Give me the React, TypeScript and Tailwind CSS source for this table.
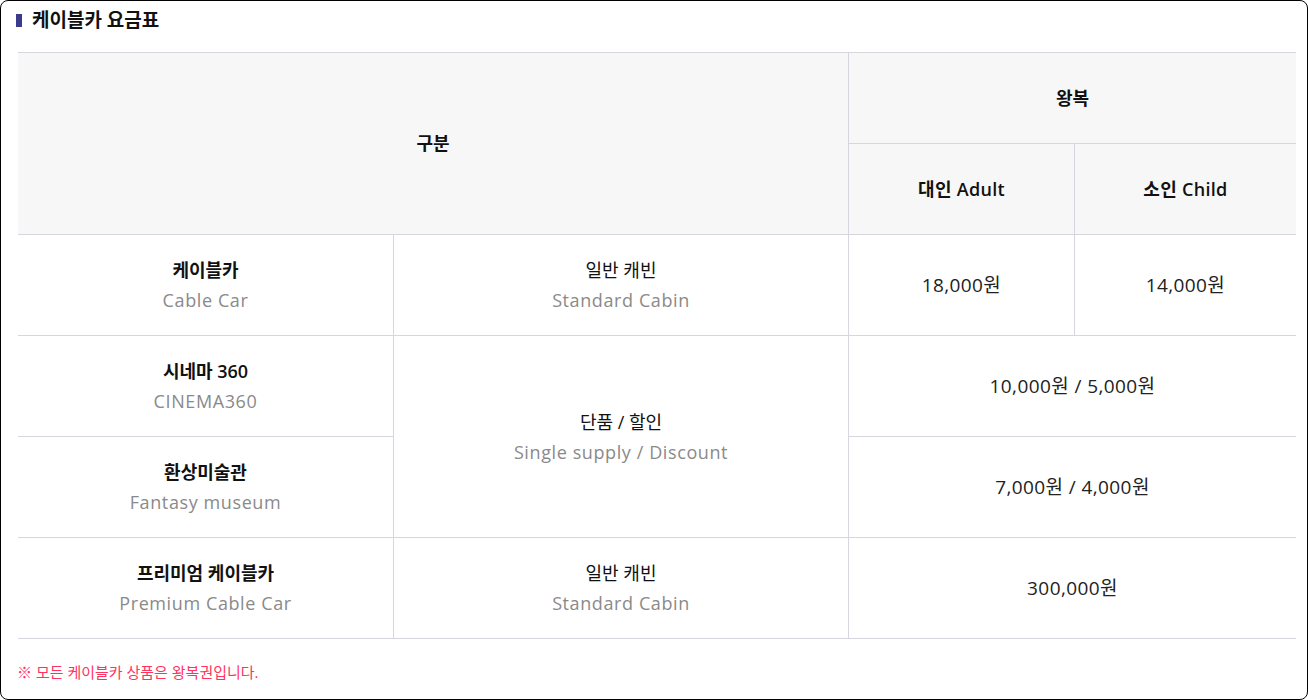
import React from "react";

const font = { fontFamily: '"Open Sans", "Noto Sans CJK KR", sans-serif' };

function Cell({
  children,
  className = "",
}: {
  children?: React.ReactNode;
  className?: string;
}) {
  return (
    <div className={`flex flex-col items-center justify-center border-b border-[#d6d6de] text-center ${className}`}>
      {children}
    </div>
  );
}

function Name({ ko, en }: { ko: string; en: string }) {
  return (
    <>
      <div className="text-[18px] font-semibold leading-[30px] text-[#111]">{ko}</div>
      <div className="text-[18px] leading-[30px] tracking-[0.6px] text-[#8a8a8a]">{en}</div>
    </>
  );
}

function Sub({ ko, en }: { ko: string; en: string }) {
  return (
    <>
      <div className="text-[18px] leading-[30px] text-[#111]">{ko}</div>
      <div className="text-[18px] leading-[30px] tracking-[0.6px] text-[#8a8a8a]">{en}</div>
    </>
  );
}

function Price({ children }: { children: React.ReactNode }) {
  return <span className="text-[19px] tracking-[0.4px] text-[#222]">{children}</span>;
}

export default function App() {
  return (
    <div
      style={font}
      className="box-border h-[700px] w-[1308px] overflow-hidden rounded-[8px] border border-black bg-white"
    >
      <div className="flex h-[38px] items-center pl-[15px] pt-[1px]">
        <span className="mr-[10px] h-[13px] w-[6px] bg-[#3b3b8e]" />
        <span className="text-[19px] font-bold text-[#111]">케이블카 요금표</span>
      </div>
      <div className="ml-[17px] mt-[13px] w-[1278px] border-t border-[#d6d6de]">
        <div className="grid grid-cols-[376px_455px_226px_221px] grid-rows-[91px_91px_101px_101px_101px_101px]">
          <Cell className="col-span-2 row-span-2 border-r bg-[#f7f7f7]">
            <span className="text-[18px] font-semibold text-[#111]">구분</span>
          </Cell>
          <Cell className="col-span-2 bg-[#f7f7f7]">
            <span className="text-[18px] font-semibold text-[#111]">왕복</span>
          </Cell>
          <Cell className="border-r bg-[#f7f7f7]">
            <span className="text-[18px] font-semibold tracking-[0.3px] text-[#111]">대인 Adult</span>
          </Cell>
          <Cell className="bg-[#f7f7f7]">
            <span className="text-[18px] font-semibold tracking-[0.3px] text-[#111]">소인 Child</span>
          </Cell>

          <Cell className="border-r">
            <Name ko="케이블카" en="Cable Car" />
          </Cell>
          <Cell className="border-r">
            <Sub ko="일반 캐빈" en="Standard Cabin" />
          </Cell>
          <Cell className="border-r">
            <Price>18,000원</Price>
          </Cell>
          <Cell>
            <Price>14,000원</Price>
          </Cell>

          <Cell className="border-r">
            <Name ko="시네마 360" en="CINEMA360" />
          </Cell>
          <Cell className="row-span-2 border-r">
            <Sub ko="단품 / 할인" en="Single supply / Discount" />
          </Cell>
          <Cell className="col-span-2">
            <Price>10,000원 / 5,000원</Price>
          </Cell>

          <Cell className="border-r">
            <Name ko="환상미술관" en="Fantasy museum" />
          </Cell>
          <Cell className="col-span-2">
            <Price>7,000원 / 4,000원</Price>
          </Cell>

          <Cell className="border-r">
            <Name ko="프리미엄 케이블카" en="Premium Cable Car" />
          </Cell>
          <Cell className="border-r">
            <Sub ko="일반 캐빈" en="Standard Cabin" />
          </Cell>
          <Cell className="col-span-2">
            <Price>300,000원</Price>
          </Cell>
        </div>
      </div>
      <div className="ml-[16px] mt-[22px] text-[15px] text-[#ff3360]">※ 모든 케이블카 상품은 왕복권입니다.</div>
    </div>
  );
}
